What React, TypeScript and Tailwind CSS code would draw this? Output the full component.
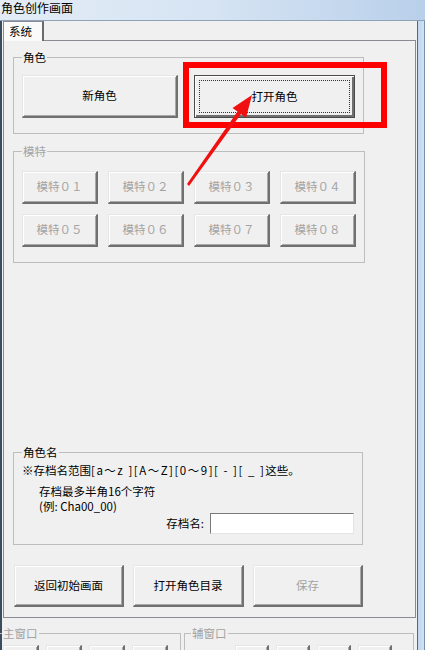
import React from "react";

const bevel =
  "bg-[#f0f0f0] border-t border-l border-r-2 border-b-2 border-t-[#e6e6e6] border-l-[#e6e6e6] border-r-[#707070] border-b-[#707070] shadow-[inset_1px_1px_0_#ffffff,inset_-1px_-1px_0_#a8a8a8]";

type BtnProps = {
  label: string;
  className?: string;
  disabled?: boolean;
};

const WinButton = ({ label, className = "", disabled }: BtnProps) => (
  <div
    className={`${bevel} ${className} flex items-center justify-center shrink-0 ${
      disabled ? "text-[#a3a3a3]" : "text-black"
    }`}
  >
    {label}
  </div>
);

const FocusButton = ({ label, className = "" }: BtnProps) => (
  <div
    className={`${className} shrink-0 border border-[#4a4a4a] bg-[#f0f0f0] shadow-[inset_1px_1px_0_#ffffff,inset_-2px_-2px_0_#6f6f6f] p-[4px]`}
  >
    <div className="w-full h-full border border-dotted border-[#333] flex items-center justify-center">
      {label}
    </div>
  </div>
);

const Group = ({
  title,
  dim,
  className = "",
  children,
}: {
  title: string;
  dim?: boolean;
  className?: string;
  children: React.ReactNode;
}) => (
  <fieldset className={`border border-[#bdbdbd] px-[8px] ${className}`}>
    <legend className={`px-[1px] leading-[14px] ${dim ? "text-[#a3a3a3]" : "text-black"}`}>{title}</legend>
    {children}
  </fieldset>
);

const models = ["模特０１", "模特０２", "模特０３", "模特０４", "模特０５", "模特０６", "模特０７", "模特０８"];

export default function App() {
  return (
    <div className="relative w-[425px] h-[650px] overflow-hidden flex flex-col bg-[#f0f0f0] text-[11.5px] text-black font-['Noto_Sans_CJK_SC',sans-serif]">
      {/* title bar */}
      <div className="h-[21px] shrink-0 border-b border-[#8ea3ba] bg-gradient-to-r from-[#e3ecf6] via-[#d6e4f3] to-[#b9d0ea] pt-[1px]">
        <div className="text-[12px] leading-[14px] pl-[1px]">角色创作画面</div>
      </div>

      <div className="flex flex-1 min-h-0">
        <div className="w-[2px] shrink-0 bg-[#3b4c5c]" />

        <div className="flex-1 min-w-0 flex flex-col">
          {/* tab header */}
          <div className="h-[19px] shrink-0 flex items-end">
            <div className="relative z-10 ml-[1px] w-[41px] h-[20px] -mb-px bg-[#fafafa] border-t border-l border-[#898c95] border-r-2 border-r-[#6b6b6b] pl-[5px] leading-[19px]">
              系统
            </div>
          </div>

          {/* tab panel */}
          <div className="ml-[1px] w-[413px] shrink-0 border border-[#898c95] bg-[#f0f0f0] pl-[9px] flex flex-col">
            <Group title="角色" className="mt-[9px] w-[350px] pb-[15px]">
              <div className="flex gap-[16px] pt-[11px]">
                <WinButton label="新角色" className="w-[156px] h-[43px]" />
                <FocusButton label="打开角色" className="w-[161px] h-[43px]" />
              </div>
            </Group>

            <Group title="模特" dim className="mt-[10px] w-[350px] pb-[15px]">
              <div className="grid grid-cols-[repeat(4,76px)] gap-x-[10px] gap-y-[10px] pt-[13px]">
                {models.map((m) => (
                  <WinButton key={m} label={m} disabled className="h-[33px]" />
                ))}
              </div>
            </Group>

            <Group title="角色名" className="mt-[182px] w-[350px] pb-[10px]">
              <div className="mt-[3px] leading-[16px] whitespace-nowrap">
                ※存档名范围<span className="tracking-[1.5px]">[a～z ][A～Z][0～9][ - ][ _ ]</span>这些。
              </div>
              <div className="mt-[5px] leading-[16px] pl-[17px]">存档最多半角16个字符</div>
              <div className="leading-[15px] pl-[17px]">(例: Cha00_00)</div>
              <div className="-mt-[1px] flex items-center justify-end gap-[6px]">
                <span>存档名:</span>
                <div className="w-[144px] h-[21px] bg-white border border-t-[#7a7a7a] border-l-[#7a7a7a] border-r-[#e3e3e3] border-b-[#e3e3e3]" />
              </div>
            </Group>

            <div className="mt-[20px] mb-[10px] pl-[1px] flex gap-[9px]">
              <WinButton label="返回初始画面" className="w-[110px] h-[42px]" />
              <WinButton label="打开角色目录" className="w-[111px] h-[42px]" />
              <WinButton label="保存" disabled className="w-[110px] h-[42px]" />
            </div>
          </div>

          {/* lower window area */}
          <div className="flex mt-[8px]">
            <Group title="主窗口" dim className="-ml-[12px] w-[191px] !px-[11px]">
              <div className="flex gap-[7px] pt-[5px] pl-[1px]">
                {[0, 1, 2, 3].map((i) => (
                  <WinButton key={i} label="" className="w-[36px] h-[28px]" />
                ))}
              </div>
            </Group>
            <Group title="辅窗口" dim className="ml-[3px] w-[230px] !px-[6px]">
              <div className="flex gap-[7px] pt-[5px] pl-[44px]">
                {[0, 1, 2, 3].map((i) => (
                  <WinButton key={i} label="" className="w-[34px] h-[28px]" />
                ))}
              </div>
            </Group>
          </div>
        </div>

        {/* right window frame */}
        <div className="w-[8px] shrink-0 flex">
          <div className="w-px bg-[#56687a]" />
          <div className="flex-1 bg-gradient-to-r from-[#c0d7ef] to-[#cfe1f4]" />
          <div className="w-px bg-[#7a90a6]" />
        </div>
      </div>

      {/* annotation: red box */}
      <div className="absolute left-[183px] top-[62px] w-[204px] h-[66px] border-[6px] border-[#ff0000] pointer-events-none" />

      {/* annotation: red arrow */}
      <svg className="absolute left-0 top-0 pointer-events-none" width="425" height="650" viewBox="0 0 425 650">
        <polygon
          points="252,95 246,118 241,114 189,186 187,184 237.5,111.5 232.5,108"
          fill="#f01010"
        />
      </svg>
    </div>
  );
}
